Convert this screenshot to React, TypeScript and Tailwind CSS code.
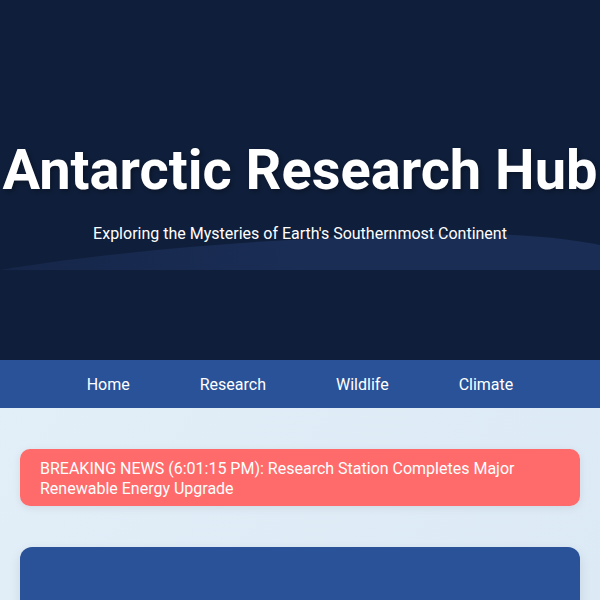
export default function App() {
  const links = ["Home", "Research", "Wildlife", "Climate"];

  return (
    <div className="min-h-screen bg-gradient-to-br from-[#e4f0f9] to-[#dbe9f5] font-['Roboto',sans-serif]">
      {/* Header */}
      <header className="relative h-[360px] overflow-hidden bg-[#0f1e3a] text-white">
        <svg
          className="absolute left-0 top-[225px] h-[50px] w-full"
          viewBox="0 0 600 50"
          preserveAspectRatio="none"
        >
          <defs>
            <linearGradient id="wave" x1="0" y1="0" x2="1" y2="0">
              <stop offset="0" stopColor="#152649" />
              <stop offset="0.5" stopColor="#1a2d55" />
              <stop offset="1" stopColor="#1a2d55" />
            </linearGradient>
          </defs>
          <path
            d="M0 45 C120 25 300 10 470 9 C530 9 570 14 600 20 L600 45 Z"
            fill="url(#wave)"
          />
        </svg>
        <div className="relative flex flex-col items-center pt-[137px]">
          <h1 className="whitespace-nowrap text-[56px] font-bold leading-[1.2] [text-shadow:2px_2px_4px_rgba(0,0,0,0.3)]">
            Antarctic Research Hub
          </h1>
          <p className="mt-[18px] text-base leading-6">
            Exploring the Mysteries of Earth's Southernmost Continent
          </p>
        </div>
      </header>

      {/* Nav */}
      <nav className="flex h-12 items-center justify-center gap-[70px] bg-[#2a5298] pt-[2px] text-white">
        {links.map((link) => (
          <a key={link} href="#" className="text-base">
            {link}
          </a>
        ))}
      </nav>

      {/* Main */}
      <main className="flex flex-col gap-[41px] px-5 pt-[41px] pb-10">
        <div className="rounded-[10px] bg-[#ff6b6b] px-5 pt-[9.5px] pb-[7.5px] text-base leading-5 text-white shadow-[0_2px_8px_rgba(0,0,0,0.08)]">
          BREAKING NEWS (6:01:15 PM): Research Station Completes Major Renewable
          Energy Upgrade
        </div>

        <section className="h-[300px] rounded-[12px] bg-[#2a5298] shadow-[0_4px_12px_rgba(0,0,0,0.1)]"></section>
      </main>
    </div>
  );
}
